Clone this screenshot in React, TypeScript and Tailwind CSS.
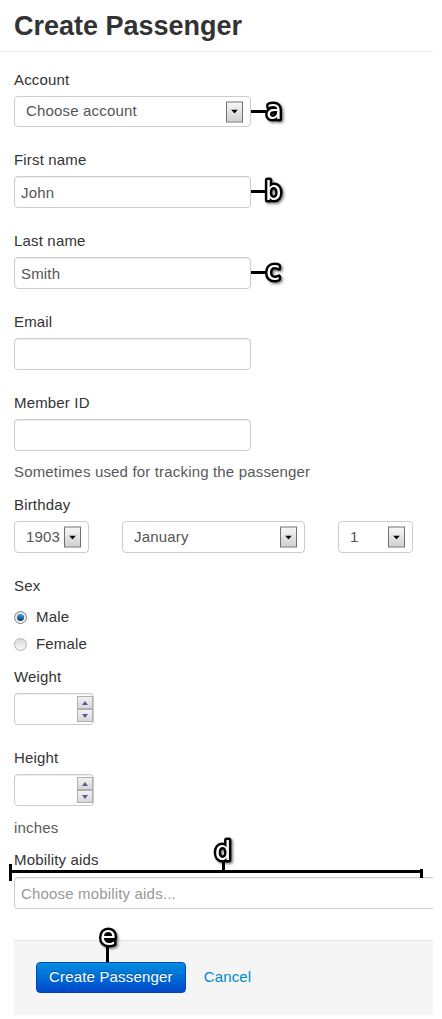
import React from "react";
import clsx from "clsx";

function DropArrow() {
  return (
    <span className="absolute right-[7px] top-1/2 flex h-[21px] w-[17px] -translate-y-1/2 items-center justify-center border border-[#707070] bg-linear-to-b from-[#f7f7f7] to-[#d0d0d0]">
      <svg width="7" height="4" viewBox="0 0 7 4">
        <path d="M0 0h7L3.5 4z" fill="#000" />
      </svg>
    </span>
  );
}

function Select({ value, className }: { value: string; className?: string }) {
  return (
    <div
      className={clsx(
        "relative flex items-center rounded-[4px] border border-[#ccc] bg-white pl-[11px] text-[#555]",
        className
      )}
    >
      {value}
      <DropArrow />
    </div>
  );
}

function TextInput({ value, placeholder, className }: { value?: string; placeholder?: string; className?: string }) {
  return (
    <input
      readOnly
      defaultValue={value}
      placeholder={placeholder}
      className={clsx(
        "block h-[32px] rounded-[4px] border border-[#ccc] bg-white px-[6px] text-[15px] tracking-[0.17px] text-[#555] shadow-[inset_0_1px_1px_rgba(0,0,0,0.075)] outline-none placeholder:text-[#999]",
        className
      )}
    />
  );
}

function SpinButton({ up }: { up?: boolean }) {
  return (
    <span className="flex h-[13px] w-[16px] items-center justify-center border border-[#b0b0b0] bg-linear-to-b from-[#f2f2f2] to-[#d8d8d8]">
      <svg width="6" height="4" viewBox="0 0 6 4">
        <path d={up ? "M0 4h6L3 0z" : "M0 0h6L3 4z"} fill="#4f5f9e" />
      </svg>
    </span>
  );
}

function NumberInput() {
  return (
    <div className="relative h-[32px] w-[80px] rounded-[4px] border border-[#ccc] bg-white shadow-[inset_0_1px_1px_rgba(0,0,0,0.075)]">
      <div className="absolute right-[0px] top-[2px] flex flex-col">
        <SpinButton up />
        <SpinButton />
      </div>
    </div>
  );
}

function Radio({ checked, label }: { checked?: boolean; label: string }) {
  return (
    <div className="flex h-[27px] items-center">
      <span
        className={clsx(
          "flex h-[13px] w-[13px] items-center justify-center rounded-full border",
          checked
            ? "border-[#7f7f7f] bg-linear-to-b from-[#e0e0e0] to-[#fafafa]"
            : "border-[#b4b4b4] bg-linear-to-b from-[#dadada] to-[#f6f6f6]"
        )}
      >
        {checked && <span className="h-[7px] w-[7px] rounded-full bg-linear-to-b from-[#4a9ae0] to-[#0a3c74]" />}
      </span>
      <span className="ml-[9px]">{label}</span>
    </div>
  );
}

function Label({ children }: { children: React.ReactNode }) {
  return <div className="mb-[6px] h-[20px] leading-[20px]">{children}</div>;
}

function Annotations() {
  const letter = {
    fontFamily: "'DejaVu Sans', sans-serif",
    fontSize: 26,
    fill: "#fff",
    stroke: "#000",
    strokeWidth: 5,
    paintOrder: "stroke",
    strokeLinejoin: "round" as const,
    filter: "url(#shadow)",
  };
  return (
    <svg className="pointer-events-none absolute left-0 top-0" width="442" height="1019">
      <defs>
        <filter id="shadow" x="-50%" y="-50%" width="200%" height="200%">
          <feDropShadow dx="1.5" dy="1.5" stdDeviation="1" floodColor="#000" floodOpacity="0.5" />
        </filter>
      </defs>
      <rect x="251" y="110" width="15" height="3" fill="#000" />
      <text x="266" y="119" style={letter}>a</text>
      <rect x="251" y="190" width="15" height="3" fill="#000" />
      <text x="265" y="200" style={letter}>b</text>
      <rect x="251" y="271" width="15" height="3" fill="#000" />
      <text x="266" y="280" style={letter}>c</text>
      <rect x="10" y="870" width="413" height="3" fill="#000" />
      <rect x="9" y="864" width="3" height="17" fill="#000" />
      <rect x="420" y="869" width="3" height="9" fill="#000" />
      <rect x="222" y="858" width="3" height="13" fill="#000" />
      <text x="223" y="860" textAnchor="middle" style={letter}>d</text>
      <rect x="106" y="944" width="3" height="18" fill="#000" />
      <text x="108" y="945" textAnchor="middle" style={letter}>e</text>
    </svg>
  );
}

export default function App() {
  return (
    <div className="relative min-h-screen bg-white font-['Liberation_Sans',Arial,sans-serif] text-[15px] tracking-[0.17px] text-[#333]">
      <div className="w-[433px] overflow-hidden">
        <div className="border-b border-[#eee] pb-[5px] pt-[6px]">
          <h1 className="pl-[14px] text-[27px] font-bold leading-[40px] tracking-normal text-[#333]">Create Passenger</h1>
        </div>

        <form className="pl-[14px] pt-[18px]">
          <div className="mb-[23px]">
            <Label>Account</Label>
            <Select value="Choose account" className="h-[31px] w-[237px]" />
          </div>

          <div className="mb-[23px]">
            <Label>First name</Label>
            <TextInput value="John" className="w-[237px]" />
          </div>

          <div className="mb-[23px]">
            <Label>Last name</Label>
            <TextInput value="Smith" className="w-[237px]" />
          </div>

          <div className="mb-[23px]">
            <Label>Email</Label>
            <TextInput className="w-[237px]" />
          </div>

          <div className="mb-[13px]">
            <Label>Member ID</Label>
            <TextInput className="w-[237px]" />
            <p className="mt-[11px] leading-[20px] text-[#595959]">Sometimes used for tracking the passenger</p>
          </div>

          <div className="mb-[23px]">
            <Label>Birthday</Label>
            <div className="flex gap-[33px]">
              <Select value="1903" className="h-[32px] w-[75px]" />
              <Select value="January" className="h-[32px] w-[183px]" />
              <Select value="1" className="h-[32px] w-[75px]" />
            </div>
          </div>

          <div className="mb-[9px]">
            <div className="mb-[8px] h-[20px] leading-[20px]">Sex</div>
            <Radio checked label="Male" />
            <Radio label="Female" />
          </div>

          <div className="mb-[23px]">
            <Label>Weight</Label>
            <NumberInput />
          </div>

          <div className="mb-[12px]">
            <Label>Height</Label>
            <NumberInput />
            <p className="mt-[12px] leading-[20px] text-[#595959]">inches</p>
          </div>

          <div>
            <div className="mb-[7px] h-[20px] leading-[20px]">Mobility aids</div>
            <TextInput placeholder="Choose mobility aids..." className="w-[440px]" />
          </div>

          <div className="mt-[31px] flex items-center border-t border-[#e5e5e5] bg-[#f5f5f5] pb-[22px] pl-[22px] pt-[21px]">
            <button
              type="button"
              className="h-[31px] rounded-[4px] border border-[#0446b8] bg-linear-to-b from-[#0a8ee0] to-[#0447c9] px-[12px] text-[15px] tracking-[0.17px] text-white [text-shadow:0_-1px_0_rgba(0,0,0,0.25)]"
            >
              Create Passenger
            </button>
            <a className="ml-[18px] text-[#0088cc]">Cancel</a>
          </div>
        </form>
      </div>
      <Annotations />
    </div>
  );
}
